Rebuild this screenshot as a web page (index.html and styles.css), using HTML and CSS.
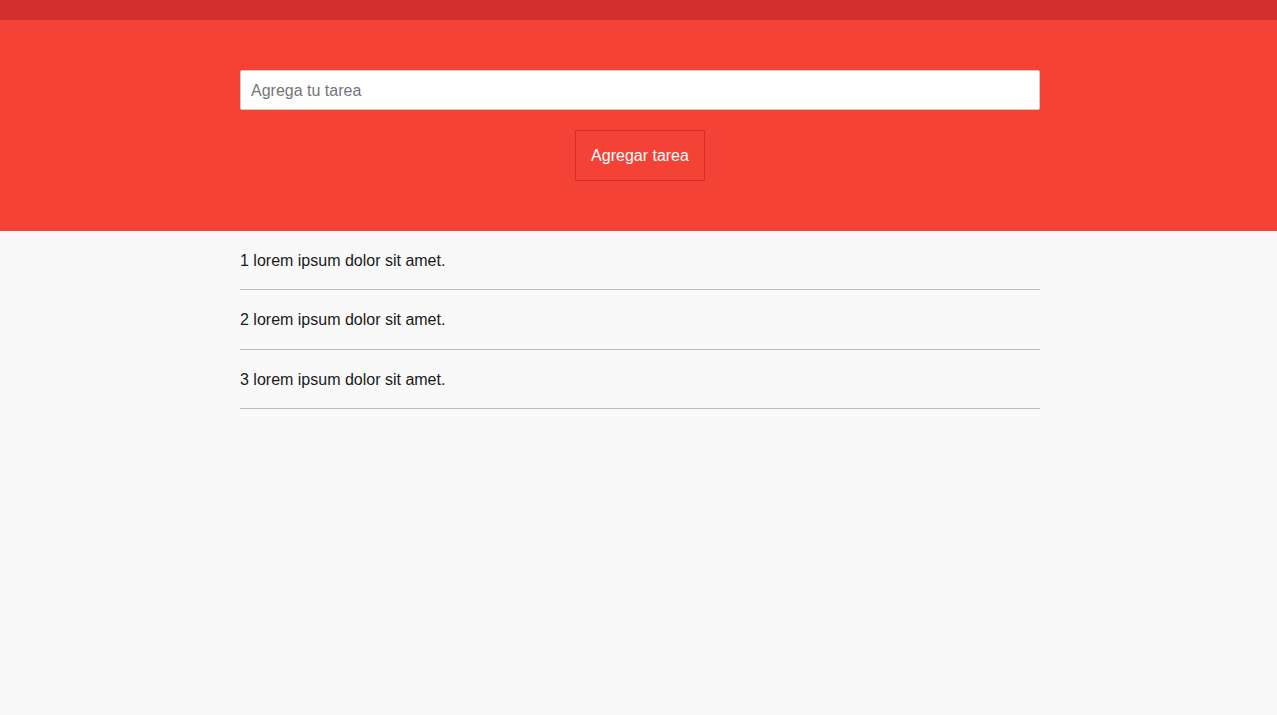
FILE: index.html
```html
<!DOCTYPE html>
<html lang="es">
<head>
<meta charset="utf-8">
<title>Tareas</title>
<link rel="stylesheet" href="styles.css">
</head>
<body>
<div class="topbar"></div>
<header class="hero">
  <form class="form">
    <input class="task-input" type="text" placeholder="Agrega tu tarea">
    <button class="add-btn" type="button">Agregar tarea</button>
  </form>
</header>
<main class="list-wrap">
  <ul class="tasks">
    <li class="task">1 lorem ipsum dolor sit amet.</li>
    <li class="task">2 lorem ipsum dolor sit amet.</li>
    <li class="task">3 lorem ipsum dolor sit amet.</li>
  </ul>
</main>
</body>
</html>
```
FILE: styles.css
```css
* { box-sizing: border-box; }
html, body { margin: 0; padding: 0; }
body {
  background: #f9f9f9;
  font-family: "Liberation Sans", Arial, sans-serif;
  font-size: 16px;
  color: #222;
}
.topbar { height: 20px; background: #d32f2f; }
.hero {
  background: #f44336;
  padding: 50px 0;
}
.form {
  width: 800px;
  margin-left: calc(50% - 398.5px);
  display: flex;
  flex-direction: column;
  align-items: center;
  gap: 20px;
}
.task-input {
  width: 100%;
  height: 40px;
  border: 1px solid #ccc;
  border-radius: 2px;
  background: #fff;
  padding: 1px 10px 0;
  font-family: inherit;
  font-size: 16px;
  color: #333;
  outline: none;
}
.task-input::placeholder { color: #757575; }
.add-btn {
  width: 130px;
  background: #f44336;
  border: 1px solid #d32f2f;
  color: #fff;
  font-family: inherit;
  font-size: 16px;
  line-height: 19px;
  padding: 15px 0;
  cursor: pointer;
}
.list-wrap { width: 800px; margin-left: calc(50% - 398.5px); }
.tasks { list-style: none; margin: 0; padding: 0; }
.task {
  padding: 21px 0 19.4px;
  line-height: 18px;
  border-bottom: 1px solid #bbb;
  color: #1a1a1a;
}
```
